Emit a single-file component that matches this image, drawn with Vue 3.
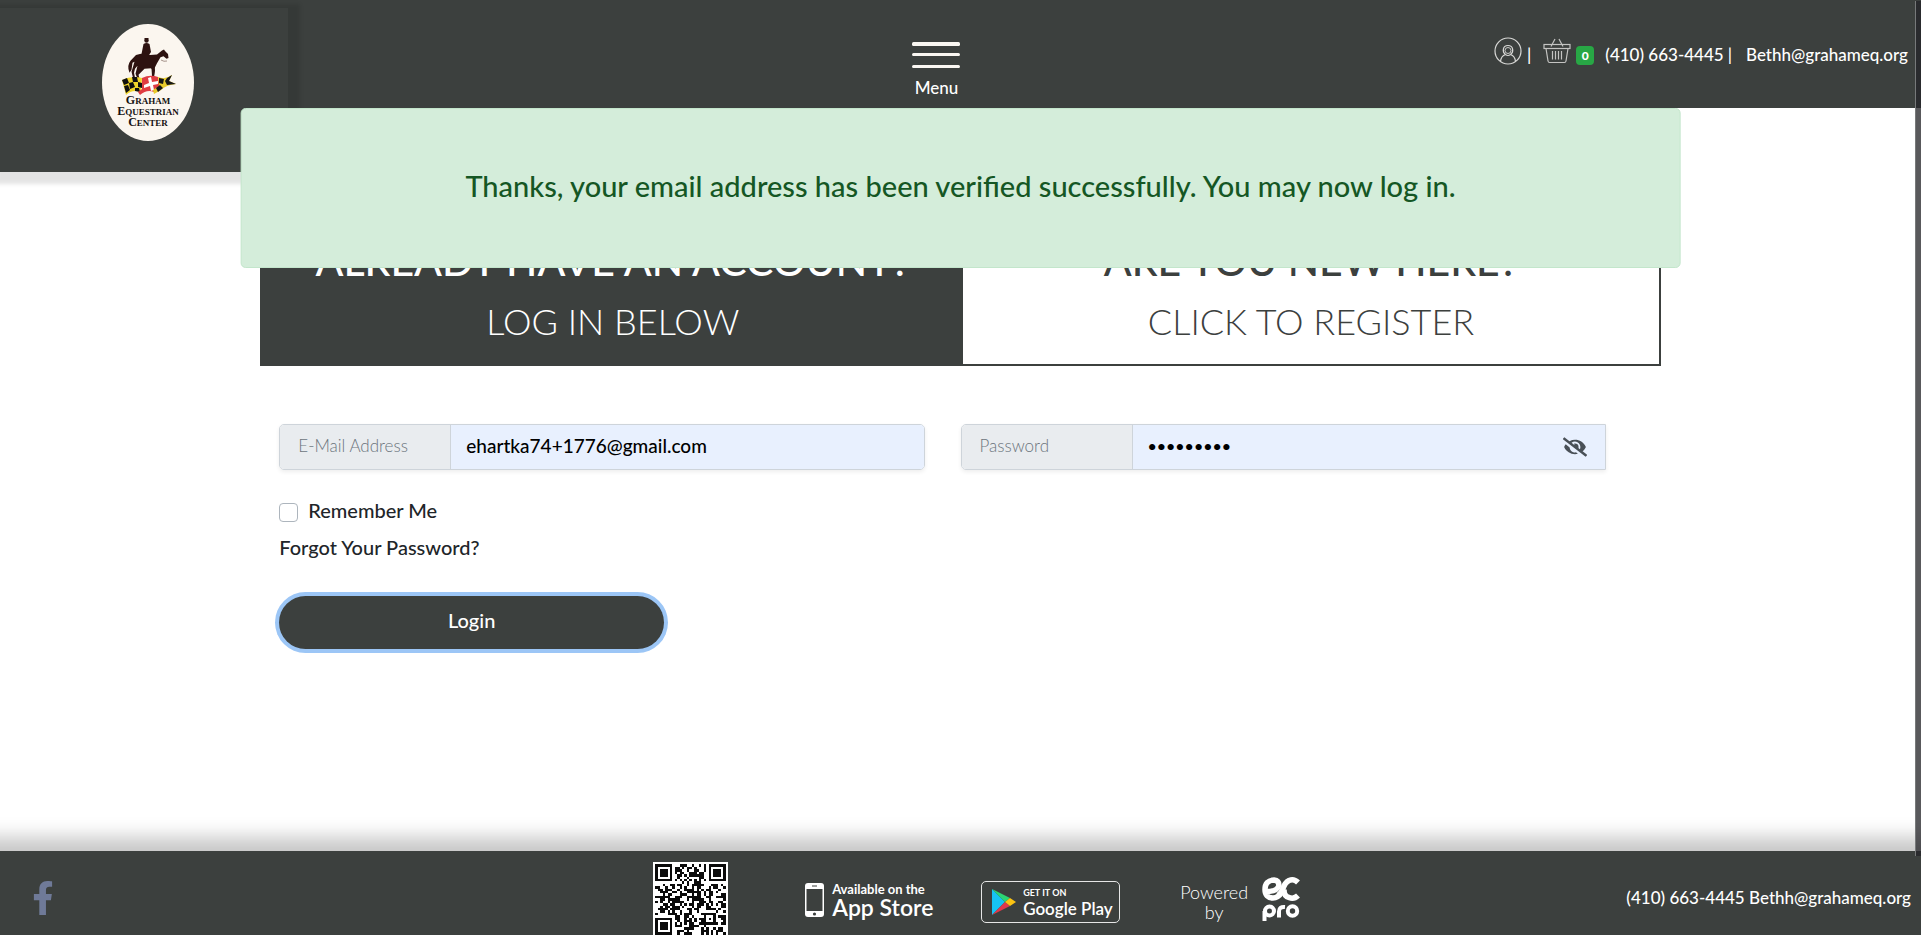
<script setup>
import { ref } from 'vue'

const email = ref('ehartka74+1776@gmail.com')
const password = ref('horses123')
const showPassword = ref(false)
const remember = ref(false)

const SIZE = 29

function distance(x, y, cx, cy) {
  return Math.max(Math.abs(x - cx), Math.abs(y - cy))
}

function isDark(x, y, noise) {
  for (const [cx, cy] of [[3, 3], [SIZE - 4, 3], [3, SIZE - 4]]) {
    const d = distance(x, y, cx, cy)
    if (d <= 4) return d === 3 || d <= 1
  }
  const a = distance(x, y, 22, 22)
  if (a <= 2) return a !== 1
  if (x === 6 || y === 6) return (x + y) % 2 === 0
  return noise > 0.48
}

function buildCode() {
  let seed = 4177
  let d = ''
  for (let y = 0; y < SIZE; y++) {
    for (let x = 0; x < SIZE; x++) {
      seed = (seed * 16807) % 2147483647
      if (isDark(x, y, seed / 2147483647)) d += `M${x + 1} ${y + 1}h1v1h-1z`
    }
  }
  return d
}

const codePath = buildCode()
</script>

<template>
  <div class="page">
    <header class="header">
      <a class="brand" href="#" aria-label="Graham Equestrian Center">
        <svg class="logo" viewBox="0 0 92 117">
          <ellipse cx="46" cy="58.500" rx="46" ry="58.500" fill="#fbf6ef" />
          <g fill="#2d1210">
            <circle cx="44.500" cy="16.500" r="2.200" />
            <path d="M42.500 14h4v1.500h-4zM41.500 20q3-2 6 0l1.500 8-2 3 1 8-3 1-3-8-2.500-2z" />
            <path d="M34 31q8-3 14 0l7-.5 5-4 2-1 1 1.500 3 3 .5 4-2 .8-3-2.500-3 1-3.500 6-2 4-1 9h-2l-.5-8-7 .5-6 6 1 4h-2l-2-5 2-8-2.500 3-1 4 1 5h-2l-1.500-6 3-10-2 1-1 7-2 3q-3-7 1-12z" />
            <path d="M50 40l3 6-1 7h-2l1-6-4-6z" />
          </g>
          <path d="M59 36q3 2 6 1" fill="none" stroke="#6b5148" stroke-width=".6" />
          <path d="M20 56q10-5 20-2l-1 14q-9-3-15 3z" fill="#f0d52b" />
          <path d="M20 56l5-2 2 5-5 2zM30 53l5 0 1 5-5 0zM27 59l4-1 2 5-5 2zM36 58l4 1v5l-4-1zM22 62l4-1 2 5-4 3zM33 64l4 0 1 4-5-1z" fill="#111" />
          <path d="M40 54q8-4 16-1l2 12-6 3q-7-3-14 3l-2-3 4-3z" fill="#df3c42" />
          <path d="M46 54l3-1 1 5 6-1v3l-5 1 1 5-3 1-1-5-6 2v-3l5-2z" fill="#fff" />
          <path d="M56 53q7 3 14-2l-3 6 7 3q-10 1-15 6l-7 4-1-4 6-4z" fill="#e8cb2b" />
          <path d="M57 54l5 1-1 5-4-1zM65 54l5-3-3 6 7 3-9 1-2-4zM54 64l4-3 3 3-5 4z" fill="#171717" />
          <g class="logo-text" text-anchor="middle" fill="#151111">
            <text x="46" y="80"><tspan class="cap">G</tspan>RAHAM</text>
            <text x="46" y="91"><tspan class="cap">E</tspan>QUESTRIAN</text>
            <text x="46" y="102"><tspan class="cap">C</tspan>ENTER</text>
          </g>
        </svg>
      </a>

      <button class="menu" type="button">
        <svg width="48" height="26" viewBox="0 0 48 26" aria-hidden="true" fill="#faf7f2">
          <rect width="48" height="4" rx="1.500" />
          <rect y="11" width="48" height="3" rx="1.500" />
          <rect y="23" width="48" height="3" rx="1.500" />
        </svg>
        <span>Menu</span>
      </button>

      <nav class="tools" aria-label="Account and contact">
        <a href="#" class="icon" aria-label="Account">
          <svg width="28" height="28" viewBox="0 0 28 28" fill="none" stroke="#d8d8d6" stroke-width="1.200">
            <circle cx="14" cy="14" r="13" />
            <path d="M11.500 17.500C8 15 8.500 8.500 14 8.500s6 6.500 2.500 9" />
            <circle cx="14" cy="13.500" r="3" stroke-width=".9" />
            <path d="M6.500 24.500q.5-5.500 5-7M21.500 24.500q-.5-5.500-5-7M11.500 17.500q2.500 2 5 0" />
          </svg>
        </a>
        <span class="bar">|</span>
        <a href="#" class="icon basket" aria-label="Basket">
          <svg width="28" height="26" viewBox="0 0 28 26" fill="none" stroke="#c4c4c2" stroke-width="1.200">
            <rect x="1" y="6.500" width="26" height="4" />
            <path d="M3 10.500l2 12.500q.3 1.500 1.500 1.500h15q1.200 0 1.500-1.500l2-12.500M8 8.500l4-7.500M20 8.500l-4-7.500M9.500 13v8.500M12.500 13v8.500M15.500 13v8.500M18.500 13v8.500" />
          </svg>
        </a>
        <span class="count">0</span>
        <a href="#" class="phone">(410) 663-4445</a>
        <span class="bar tight">|</span>
        <a href="#" class="mail">Bethh@grahameq.org</a>
      </nav>
    </header>

    <div class="alert" role="alert">Thanks, your email address has been verified successfully. You may now log in.</div>

    <main class="content">
      <div class="tabs" role="tablist">
        <button class="tab active" type="button" role="tab" aria-selected="true">
          <strong>ALREADY HAVE AN ACCOUNT?</strong>
          <span>LOG IN BELOW</span>
        </button>
        <button class="tab" type="button" role="tab" aria-selected="false">
          <strong>ARE YOU NEW HERE?</strong>
          <span>CLICK TO REGISTER</span>
        </button>
      </div>

      <form class="form" @submit.prevent>
        <div class="fields">
          <div class="group">
            <label for="email">E-Mail Address</label>
            <input id="email" v-model="email" type="email" autocomplete="off">
          </div>
          <div class="group secret">
            <label for="password">Password</label>
            <input id="password" v-model="password" :type="showPassword ? 'text' : 'password'" autocomplete="off">
            <button class="eye" type="button" aria-label="Show password" @click="showPassword = !showPassword">
              <svg width="24" height="20" viewBox="0 0 640 512" fill="#495057">
                <path d="M320 400c-75.850 0-137.250-58.710-142.900-133.110L72.200 185.820c-13.790 17.300-26.480 35.590-36.720 55.590a32.350 32.350 0 0 0 0 29.190C89.710 376.410 197.070 448 320 448c26.910 0 52.870-4 77.890-10.460L346 397.390a144.130 144.130 0 0 1-26 2.610zm313.820 58.100l-110.550-85.440a331.250 331.250 0 0 0 81.250-102.070 32.350 32.350 0 0 0 0-29.190C550.290 135.590 442.930 64 320 64a308.150 308.150 0 0 0-147.320 37.700L45.460 3.370A16 16 0 0 0 23 6.180L3.370 31.450A16 16 0 0 0 6.180 53.900l588.360 454.730a16 16 0 0 0 22.460-2.810l19.640-25.270a16 16 0 0 0-2.820-22.450zm-183.720-142l-39.300-30.380A94.750 94.750 0 0 0 416 256a94.760 94.760 0 0 0-121.310-92.210A47.650 47.650 0 0 1 304 192a46.640 46.640 0 0 1-1.540 10l-73.610-56.890A142.310 142.310 0 0 1 320 112a143.920 143.920 0 0 1 144 144c0 21.630-5.290 41.790-13.900 60.110z" />
              </svg>
            </button>
          </div>
        </div>
        <div class="remember">
          <input id="remember" v-model="remember" type="checkbox">
          <label for="remember">Remember Me</label>
        </div>
        <a class="forgot" href="#">Forgot Your Password?</a>
        <button class="login" type="submit">Login</button>
      </form>
    </main>

    <footer class="footer">
      <a class="facebook" href="#" aria-label="Facebook">
        <svg width="22" height="34" viewBox="0 0 320 512" fill="#6f7a98">
          <path d="M279.140 288l14.220-92.660h-88.910v-60.130c0-25.350 12.420-50.060 52.240-50.060h40.420V6.260S260.430 0 225.360 0c-73.220 0-121.080 44.380-121.080 124.720v70.620H22.890V288h81.390v224h100.170V288z" />
        </svg>
      </a>
      <div class="apps">
        <svg class="code" viewBox="0 0 31 31" shape-rendering="crispEdges" aria-label="QR code">
          <rect width="31" height="31" fill="#fff" />
          <path :d="codePath" fill="#0b0b0b" />
        </svg>
        <a class="appstore" href="#">
          <svg width="19" height="34" viewBox="0 0 19 34" aria-hidden="true">
            <rect width="19" height="34" rx="3" fill="#fff" />
            <rect x="1.500" y="6" width="16" height="22" fill="#3c403e" />
            <path d="M7 3h5" stroke="#3c403e" />
            <circle cx="9.500" cy="31" r="1.600" fill="#3c403e" />
          </svg>
          <span class="store">
            <small>Available on the</small>
            <b>App Store</b>
          </span>
        </a>
        <a class="play" href="#">
          <svg width="25" height="28" viewBox="0 0 25 28" aria-hidden="true">
            <path d="M1 1v26l13-13z" fill="#16c3f3" />
            <path d="M1 1l13 13 5-4z" fill="#2bd575" />
            <path d="M1 27l13-13 5 4z" fill="#e0384c" />
            <path d="M14 14l5-4 6 4-6 4z" fill="#fcc413" />
          </svg>
          <span class="store">
            <small>GET IT ON</small>
            <b>Google Play</b>
          </span>
        </a>
        <a class="powered" href="#">
          <span>Powered<br>by</span>
          <svg width="38" height="44" viewBox="0 0 38 44" fill="none" stroke="#fff" aria-label="ec pro">
            <path d="M5 14.500q10 0 12-6 0-5-5-5.500C6 3 3 7 3 12.500S6 21 11 21q5 0 9-6" stroke-width="5.500" />
            <path d="M36 5.500q-4-4-9-2-4 2-6 8-2 5-5 7M36 18.500q-4 4-9 2-5-1-5-8" stroke-width="5.500" />
            <path d="M2.500 44V34" stroke-width="4" />
            <circle cx="7.500" cy="34" r="4.500" stroke-width="4" />
            <path d="M17 40.500v-6q0-5 6-4.500" stroke-width="4" />
            <circle cx="30.500" cy="34" r="4.700" stroke-width="4" />
          </svg>
        </a>
      </div>
      <p class="contact"><a href="#">(410) 663-4445</a> <a href="#">Bethh@grahameq.org</a></p>
    </footer>

    <div class="scrollbar" aria-hidden="true"></div>
  </div>
</template>

<style>
body {
  background: #fff;
}
</style>

<style scoped>
.page {
  position: relative;
  display: flex;
  flex-direction: column;
  min-height: 100vh;
  font-family: Lato, "Open Sans", sans-serif;
  font-size: 20px;
  font-weight: 500;
  color: #212529;
  overflow: hidden;
}
.page * {
  box-sizing: border-box;
}
a {
  color: inherit;
  text-decoration: none;
}
button,
input {
  margin: 0;
  font: inherit;
}
svg {
  display: block;
  flex: none;
}
.header {
  position: relative;
  display: grid;
  grid-template-columns: 45.5% 6.5% 48%;
  height: 108px;
  background: #3c403e;
  color: #fff;
}
.brand {
  position: absolute;
  top: 8px;
  left: 0;
  width: 15%;
  height: 164px;
  padding: 16px 0 0 102px;
  background: #3c403e;
  box-shadow: 4px 4px 4px 8px rgba(0, 0, 0, 0.11);
}
.logo {
  width: 92px;
  height: 117px;
}
.logo-text {
  font: bold 9px "Liberation Serif", serif;
}
.cap {
  font-size: 12px;
}
.menu {
  grid-column: 2;
  display: flex;
  flex-direction: column;
  align-items: center;
  gap: 9px;
  padding: 42px 0 0;
  border: 0;
  background: none;
  color: #fff;
  font-size: 17px;
  line-height: 22px;
}
.tools {
  display: flex;
  justify-content: flex-end;
  align-items: center;
  padding-right: 13px;
  font-size: 17px;
}
.icon {
  margin: 0 5px 6px 0;
}
.basket {
  margin-left: 12px;
}
.count {
  width: 18px;
  margin: 3px 11px 0 0;
  border-radius: 4px;
  background: #28a745;
  font-size: 12px;
  font-weight: 900;
  line-height: 19px;
  text-align: center;
}
.tight {
  margin: 0 14px 0 4px;
}
.alert {
  position: absolute;
  top: 108px;
  left: 50%;
  width: 75%;
  padding: 56px 20px 60px;
  border: 1px solid #c3e6cb;
  border-radius: 5px;
  transform: translateX(-50%);
  background: #d4edda;
  color: #155724;
  font-size: 29px;
  line-height: 42px;
  text-align: center;
}
.content {
  width: 72.9%;
  margin: 0 auto;
  padding-top: 108px;
}
.tabs {
  display: grid;
  grid-template-columns: 50.2% 49.8%;
  border: 2px solid #3c403e;
}
.tab {
  display: flex;
  flex-direction: column;
  align-items: center;
  padding: 16px 0 14px;
  border: 0;
  background: #fff;
  color: #3c403e;
  font-size: 36px;
  line-height: 58px;
}
.tab strong {
  margin-bottom: 4px;
  font-size: 41px;
  font-weight: 500;
  line-height: 54px;
}
.tab span {
  font-weight: 300;
}
.tab.active {
  background: #3c403e;
  color: #fff;
}
.form {
  display: flex;
  flex-direction: column;
  align-items: flex-start;
  padding: 58px 55px 0 19px;
}
.fields {
  display: grid;
  grid-template-columns: 1fr 1fr;
  gap: 36px;
  align-self: stretch;
}
.group {
  position: relative;
  display: flex;
  height: 46px;
  border: 1px solid #ced4da;
  border-radius: 5px;
  box-shadow: 0 2px 4px rgba(0, 0, 0, 0.07);
  overflow: hidden;
}
.secret {
  border-radius: 5px 0 0 5px;
}
.group label {
  width: 171px;
  padding-left: 18px;
  border-right: 1px solid #ced4da;
  background: #e9ecef;
  color: #6c757d;
  font-size: 17px;
  font-weight: 300;
  line-height: 42px;
}
.group input {
  flex: 1;
  min-width: 0;
  padding: 0 15px 4px;
  border: 0;
  background: #e8f0fe;
  color: #000;
  font-size: 19px;
  outline: none;
}
.group input[type="password"] {
  font-size: 16px;
}
.eye {
  position: absolute;
  top: 12px;
  right: 18px;
  padding: 0;
  border: 0;
  background: none;
}
.remember {
  display: flex;
  align-items: center;
  gap: 10px;
  margin-top: 26px;
  line-height: 28px;
}
.remember input {
  appearance: none;
  width: 19px;
  height: 19px;
  margin-top: 4px;
  border: 1px solid #adb5bd;
  border-radius: 4px;
  background: #fff;
}
.forgot {
  margin-top: 9px;
  line-height: 28px;
}
.login {
  width: 29%;
  height: 53px;
  margin-top: 35px;
  padding: 0 0 6px;
  border: 0;
  border-radius: 27px;
  background: #3c403e;
  box-shadow: 0 0 0 4px #9cc6f6;
  color: #fff;
}
.footer {
  display: grid;
  grid-template-columns: 34% auto 1fr;
  height: 84px;
  margin-top: auto;
  background: #3c403e;
  color: #fff;
  box-shadow: 0 12px 18px 26px rgba(0, 0, 0, 0.22);
}
.facebook {
  padding: 30px 0 0 32px;
}
.apps {
  display: flex;
  overflow: hidden;
}
.code {
  width: 75px;
  height: 75px;
  margin: 11px 77px 0 0;
}
.appstore {
  display: flex;
  gap: 8px;
  width: 130px;
  margin: 32px 46px 0 0;
}
.store {
  display: flex;
  flex-direction: column;
  white-space: nowrap;
}
.store small {
  font-size: 13px;
  font-weight: 700;
  line-height: 12px;
}
.store b {
  font-size: 23px;
  font-weight: 600;
  line-height: 25px;
}
.play {
  display: flex;
  align-items: center;
  gap: 7px;
  width: 139px;
  height: 42px;
  margin: 30px 60px 0 0;
  padding-left: 9px;
  border: 1px solid #e6e6e6;
  border-radius: 5px;
}
.play .store small {
  font-size: 9px;
  font-weight: 700;
  line-height: 12px;
}
.play .store b {
  font-size: 17px;
  line-height: 19px;
}
.powered {
  display: flex;
  gap: 14px;
  padding-top: 26px;
  text-align: center;
  font-size: 18px;
  font-weight: 300;
}
.powered span {
  padding-top: 5px;
  line-height: 20px;
}
.contact {
  margin: 35px 10px 0 0;
  font-size: 17px;
  line-height: 24px;
  text-align: right;
}
.scrollbar {
  position: absolute;
  top: 1px;
  right: 0;
  bottom: 79px;
  width: 6px;
  border-left: 1px solid #77797a;
  background: rgba(37, 37, 41, 0.76);
}
</style>
